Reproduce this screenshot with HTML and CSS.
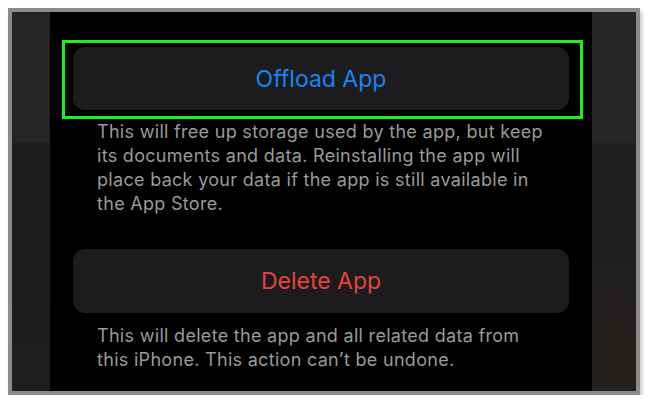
FILE: index.html
```html
<!DOCTYPE html>
<html lang="en">
<head>
<meta charset="utf-8">
<title>Offload App</title>
<link rel="stylesheet" href="styles.css">
</head>
<body>
<div class="frame">
  <div class="side side-left"></div>
  <div class="main">
    <div class="btn btn-blue">Offload App</div>
    <p class="desc">This will free up storage used by the app, but keep<br>its documents and data. Reinstalling the app will<br>place back your data if the app is still available in<br>the App Store.</p>
    <div class="btn btn-red">Delete App</div>
    <p class="desc desc-last">This will delete the app and all related data from<br>this iPhone. This action can’t be undone.</p>
    <div class="highlight"></div>
  </div>
  <div class="side side-right"></div>
</div>
</body>
</html>
```

FILE: styles.css
```css
html, body {
  margin: 0;
  padding: 0;
  background: #ffffff;
}

.frame {
  box-sizing: border-box;
  margin: 8px 0 0 8px;
  width: 632px;
  height: 387px;
  border: 4px solid #8b8b8b;
  box-shadow: 2px 3px 4px rgba(0, 0, 0, 0.22);
  display: grid;
  grid-template-columns: 38px 1fr 44px;
  overflow: hidden;
}

.side-left {
  background: linear-gradient(to bottom, #252525 0, #252525 130px, #1c1c1c 132px, #1e1e1e 100%);
}

.side-right {
  background: linear-gradient(to bottom, #262626 0, #262626 130px, #1f1f1f 132px, #25211f 100%);
}

.main {
  position: relative;
  background: #000000;
  padding: 35px 23px 0;
  font-family: Inter, "Noto Sans", sans-serif;
}

.btn {
  height: 63px;
  border-radius: 12px;
  background: #1c1c1e;
  display: flex;
  align-items: center;
  justify-content: center;
  font-size: 23px;
  letter-spacing: 0;
}

.btn-blue {
  color: #1a84f5;
}

.btn-red {
  height: 64px;
  margin-top: 33px;
  color: #e5443a;
}

.desc {
  margin: 10px 0 0;
  padding: 0 24px;
  font-size: 18px;
  line-height: 24px;
  color: #9a9a9a;
  letter-spacing: 0.3px;
}

.desc-last {
  margin-top: 11px;
}

.highlight {
  position: absolute;
  left: 12px;
  top: 28px;
  width: 521px;
  height: 79px;
  box-sizing: border-box;
  border: 3px solid #1ef01e;
}
```
